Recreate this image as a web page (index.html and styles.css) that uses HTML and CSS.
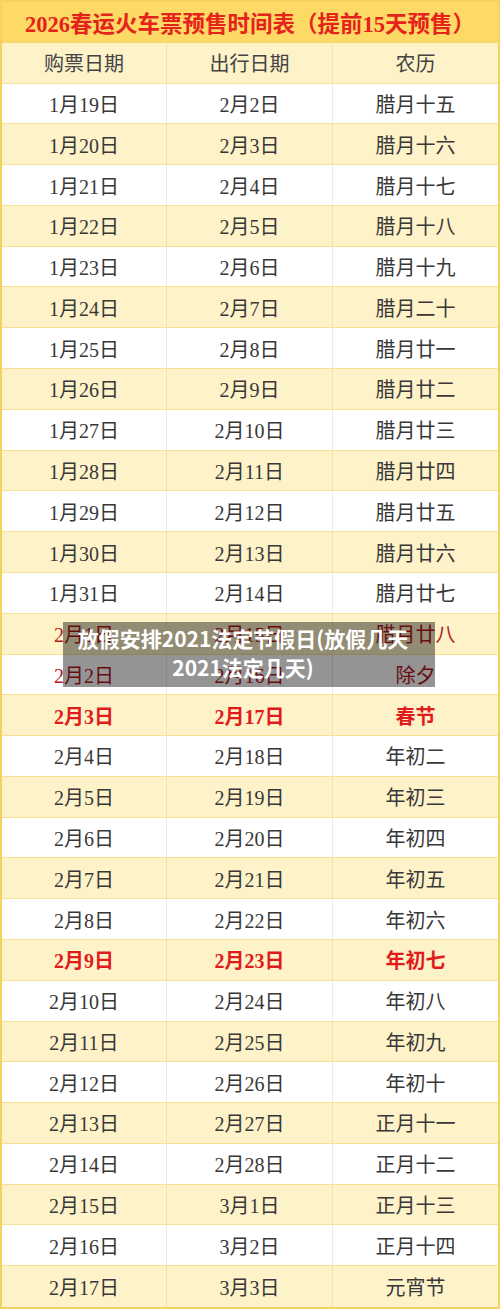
FILE: index.html
```html
<!DOCTYPE html>
<html lang="zh-CN">
<head>
<meta charset="utf-8">
<title>2026春运火车票预售时间表</title>
<link rel="stylesheet" href="styles.css">
</head>
<body>
<div class="page">
  <div class="table">
    <div class="title">2026春运火车票预售时间表（提前15天预售）</div>
    <div class="row head"><div class="cell">购票日期</div><div class="cell">出行日期</div><div class="cell">农历</div></div>
    <div class="row"><div class="cell">1月19日</div><div class="cell">2月2日</div><div class="cell">腊月十五</div></div>
    <div class="row alt"><div class="cell">1月20日</div><div class="cell">2月3日</div><div class="cell">腊月十六</div></div>
    <div class="row"><div class="cell">1月21日</div><div class="cell">2月4日</div><div class="cell">腊月十七</div></div>
    <div class="row alt"><div class="cell">1月22日</div><div class="cell">2月5日</div><div class="cell">腊月十八</div></div>
    <div class="row"><div class="cell">1月23日</div><div class="cell">2月6日</div><div class="cell">腊月十九</div></div>
    <div class="row alt"><div class="cell">1月24日</div><div class="cell">2月7日</div><div class="cell">腊月二十</div></div>
    <div class="row"><div class="cell">1月25日</div><div class="cell">2月8日</div><div class="cell">腊月廿一</div></div>
    <div class="row alt"><div class="cell">1月26日</div><div class="cell">2月9日</div><div class="cell">腊月廿二</div></div>
    <div class="row"><div class="cell">1月27日</div><div class="cell">2月10日</div><div class="cell">腊月廿三</div></div>
    <div class="row alt"><div class="cell">1月28日</div><div class="cell">2月11日</div><div class="cell">腊月廿四</div></div>
    <div class="row"><div class="cell">1月29日</div><div class="cell">2月12日</div><div class="cell">腊月廿五</div></div>
    <div class="row alt"><div class="cell">1月30日</div><div class="cell">2月13日</div><div class="cell">腊月廿六</div></div>
    <div class="row"><div class="cell">1月31日</div><div class="cell">2月14日</div><div class="cell">腊月廿七</div></div>
    <div class="row alt dark-red"><div class="cell">2月1日</div><div class="cell">2月15日</div><div class="cell">腊月廿八</div></div>
    <div class="row dark-red"><div class="cell">2月2日</div><div class="cell">2月16日</div><div class="cell">除夕</div></div>
    <div class="row alt red"><div class="cell">2月3日</div><div class="cell">2月17日</div><div class="cell">春节</div></div>
    <div class="row"><div class="cell">2月4日</div><div class="cell">2月18日</div><div class="cell">年初二</div></div>
    <div class="row alt"><div class="cell">2月5日</div><div class="cell">2月19日</div><div class="cell">年初三</div></div>
    <div class="row"><div class="cell">2月6日</div><div class="cell">2月20日</div><div class="cell">年初四</div></div>
    <div class="row alt"><div class="cell">2月7日</div><div class="cell">2月21日</div><div class="cell">年初五</div></div>
    <div class="row"><div class="cell">2月8日</div><div class="cell">2月22日</div><div class="cell">年初六</div></div>
    <div class="row alt red"><div class="cell">2月9日</div><div class="cell">2月23日</div><div class="cell">年初七</div></div>
    <div class="row"><div class="cell">2月10日</div><div class="cell">2月24日</div><div class="cell">年初八</div></div>
    <div class="row alt"><div class="cell">2月11日</div><div class="cell">2月25日</div><div class="cell">年初九</div></div>
    <div class="row"><div class="cell">2月12日</div><div class="cell">2月26日</div><div class="cell">年初十</div></div>
    <div class="row alt"><div class="cell">2月13日</div><div class="cell">2月27日</div><div class="cell">正月十一</div></div>
    <div class="row"><div class="cell">2月14日</div><div class="cell">2月28日</div><div class="cell">正月十二</div></div>
    <div class="row alt"><div class="cell">2月15日</div><div class="cell">3月1日</div><div class="cell">正月十三</div></div>
    <div class="row"><div class="cell">2月16日</div><div class="cell">3月2日</div><div class="cell">正月十四</div></div>
    <div class="row alt last"><div class="cell">2月17日</div><div class="cell">3月3日</div><div class="cell">元宵节</div></div>
  </div>
  <div class="caption">放假安排2021法定节假日(放假几天2021法定几天)</div>
</div>
</body>
</html>
```

FILE: styles.css
```css
html, body {
  margin: 0;
  padding: 0;
  background: #ffffff;
}

.page {
  position: relative;
  width: 500px;
  height: 1309px;
  overflow: hidden;
}

.table {
  box-sizing: border-box;
  width: 500px;
  height: 1309px;
  display: grid;
  grid-template-rows: repeat(32, 1fr);
  border: 2px solid #f3d260;
  font-family: "Liberation Serif", "Noto Sans CJK SC", serif;
  color: #383838;
  font-size: 20px;
}

.title {
  background: #fdd966;
  color: #e5231b;
  font-weight: bold;
  font-size: 22.5px;
  display: flex;
  align-items: center;
  justify-content: center;
  border-bottom: 1px solid #f6d56a;
  white-space: nowrap;
}

.row {
  display: grid;
  grid-template-columns: 165px 166px 1fr;
  background: #ffffff;
  border-bottom: 1px solid #f7e193;
}

.row.alt,
.row.head {
  background: #fef2c9;
}

.row.last {
  border-bottom: none;
}

.cell {
  display: flex;
  align-items: center;
  justify-content: center;
  border-right: 1px solid #ebebeb;
}

.row.alt .cell,
.row.head .cell {
  border-right-color: #f5e3a6;
}

.cell:last-child {
  border-right: none;
}

.row.head {
  color: #444444;
}

.row.dark-red {
  color: #b3161c;
}

.row.red {
  color: #e11b1b;
  font-weight: bold;
}

.caption {
  position: absolute;
  left: 63px;
  top: 622px;
  width: 372px;
  height: 65px;
  box-sizing: border-box;
  padding: 2px 20px 0 8px;
  background: rgba(0, 0, 0, 0.42);
  color: #ffffff;
  font-family: "Noto Sans CJK SC", "Noto Sans", sans-serif;
  font-weight: bold;
  font-size: 21px;
  line-height: 29px;
  text-align: center;
}
```
